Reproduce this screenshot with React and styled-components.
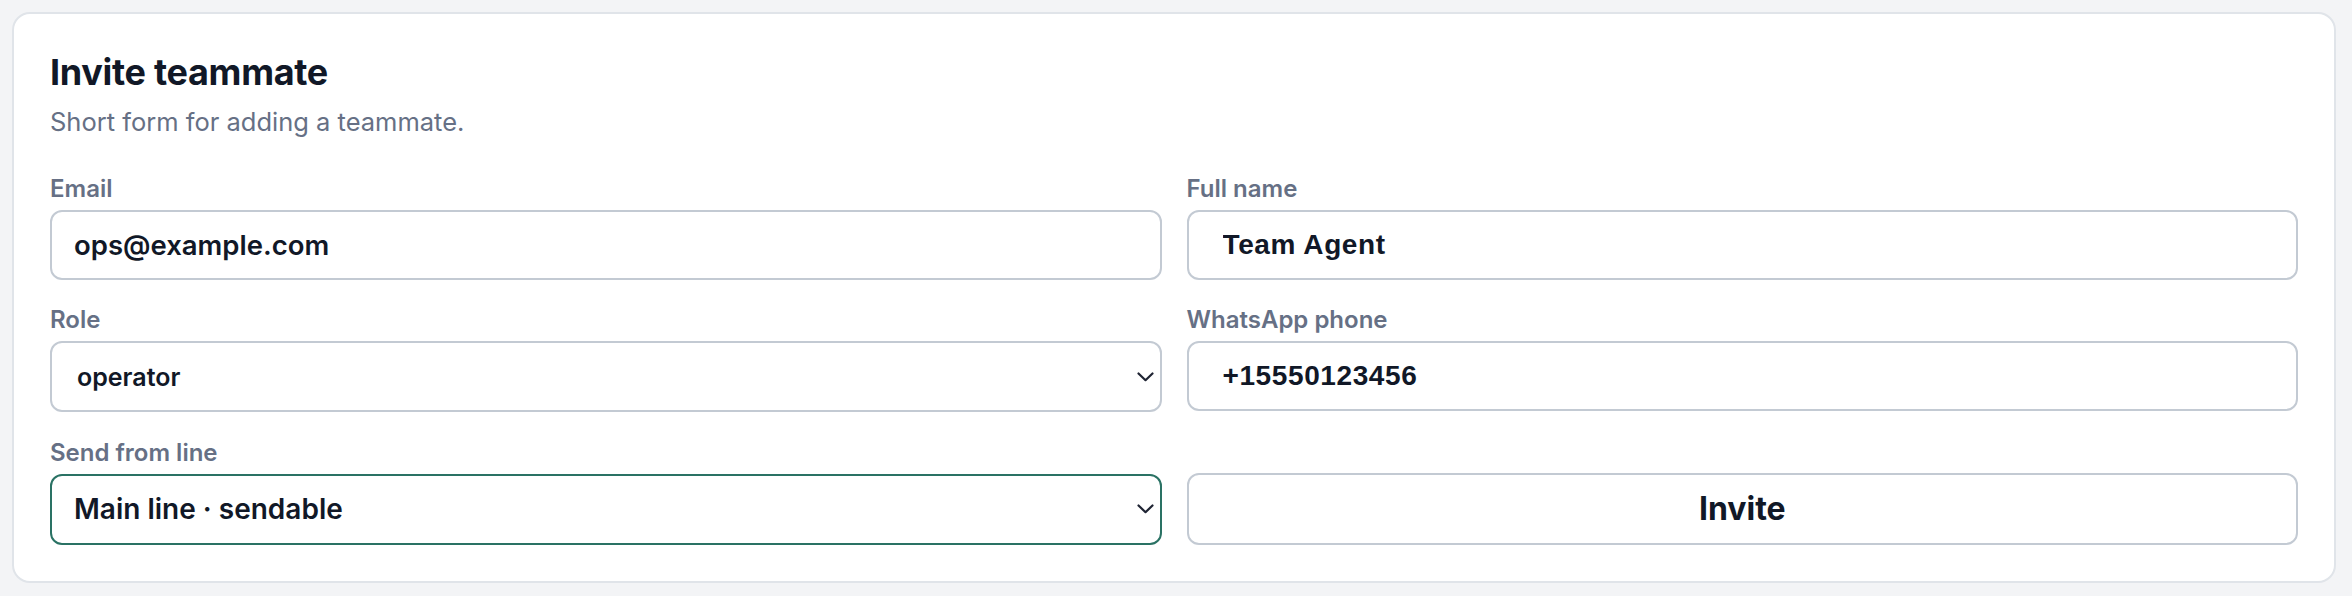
import React, { useState } from 'react';
import styled, { createGlobalStyle } from "styled-components";

const GlobalStyle = createGlobalStyle`
    html, body {
        margin: 0;
        padding: 0;
        background: #f3f4f6;
        font-family: Inter, "Noto Sans", sans-serif;
        color: #111827;
    }
`

function Chevron() {
    return (
        <ChevronIcon width="17" height="10" viewBox="0 0 17 10" fill="none">
            <path d="M1.5 1.5 L8.5 8.2 L15.5 1.5" stroke="#1f2433" strokeWidth="2.2" strokeLinecap="round" strokeLinejoin="round" />
        </ChevronIcon>
    )
}

function Field({ label, children }) {
    return (
        <FieldBox>
            <Label>{label}</Label>
            {children}
        </FieldBox>
    )
}

function InviteTeammate() {
    const [email, setEmail] = useState("ops@example.com");
    const [name, setName] = useState("Team Agent");
    const [role, setRole] = useState("operator");
    const [phone, setPhone] = useState("+15550123456");
    const [line, setLine] = useState("main");

    return (
        <Card>
            <Title>Invite teammate</Title>
            <Subtitle>Short form for adding a teammate.</Subtitle>
            <Grid>
                <Field label="Email">
                    <Input value={email} onChange={(e) => setEmail(e.target.value)} />
                </Field>
                <Field label="Full name">
                    <Input $wide value={name} onChange={(e) => setName(e.target.value)} />
                </Field>
                <Field label="Role">
                    <SelectWrap>
                        <Select $small value={role} onChange={(e) => setRole(e.target.value)}>
                            <option value="operator">operator</option>
                            <option value="admin">admin</option>
                        </Select>
                        <Chevron />
                    </SelectWrap>
                </Field>
                <Field label="WhatsApp phone">
                    <Input $wide value={phone} onChange={(e) => setPhone(e.target.value)} />
                </Field>
                <Field label="Send from line">
                    <SelectWrap>
                        <Select $focused value={line} onChange={(e) => setLine(e.target.value)}>
                            <option value="main">Main line · sendable</option>
                        </Select>
                        <Chevron />
                    </SelectWrap>
                </Field>
                <Button type="button">Invite</Button>
            </Grid>
        </Card>
    )
}

export default function App() {
    return (
        <Page>
            <GlobalStyle />
            <InviteTeammate />
        </Page>
    )
}

const Page = styled.div`
    padding: 12px 16px 13px 12px;
`

const Card = styled.section`
    background: #fff;
    border: 2px solid #e0e4e9;
    border-radius: 18px;
    padding: 37px 36px 36px 36px;
`

const Title = styled.h2`
    margin: 0;
    font-size: 36px;
    line-height: 42px;
    font-weight: 700;
    letter-spacing: -0.3px;
    color: #111827;
`

const Subtitle = styled.p`
    margin: 12px 0 0;
    font-size: 25.5px;
    line-height: 34px;
    color: #667085;
`

const Grid = styled.div`
    margin-top: 33.5px;
    display: grid;
    grid-template-columns: 1fr 1fr;
    gap: 24.5px 25px;
`

const FieldBox = styled.div`
    display: flex;
    flex-direction: column;
    gap: 6px;
`

const Label = styled.label`
    font-size: 24px;
    line-height: 31px;
    font-weight: 600;
    color: #667085;
`

const Input = styled.input`
    box-sizing: border-box;
    height: 70px;
    width: 100%;
    border: 2px solid #c3cad3;
    border-radius: 12px;
    background: #fff;
    padding: 0 0 0 ${(p) => (p.$wide ? "34px" : "22px")};
    font-family: ${(p) => (p.$wide ? '"Liberation Sans", Arial, sans-serif' : "Inter, sans-serif")};
    font-size: ${(p) => (p.$wide ? "28px" : "27.5px")};
    font-weight: ${(p) => (p.$wide ? 700 : 600)};
    letter-spacing: ${(p) => (p.$wide ? "0.6px" : "0")};
    color: #111827;
    outline: none;
`

const SelectWrap = styled.div`
    position: relative;
`

const Select = styled.select`
    box-sizing: border-box;
    appearance: none;
    height: 71px;
    width: 100%;
    border: 2px solid ${(p) => (p.$focused ? "#2a7264" : "#c3cad3")};
    border-radius: 12px;
    background: #fff;
    padding: 0 40px 0 ${(p) => (p.$small ? "25px" : "22px")};
    font-family: Inter, sans-serif;
    font-size: ${(p) => (p.$small ? "25px" : "28px")};
    font-weight: 600;
    color: #111827;
    outline: none;
`

const ChevronIcon = styled.svg`
    position: absolute;
    right: 8px;
    top: 50%;
    transform: translateY(-50%);
    pointer-events: none;
`

const Button = styled.button`
    align-self: end;
    box-sizing: border-box;
    height: 72px;
    width: 100%;
    border: 2px solid #c3cad3;
    border-radius: 12px;
    background: #fff;
    font-family: Inter, sans-serif;
    font-size: 32px;
    font-weight: 700;
    color: #111827;
    cursor: pointer;
`
